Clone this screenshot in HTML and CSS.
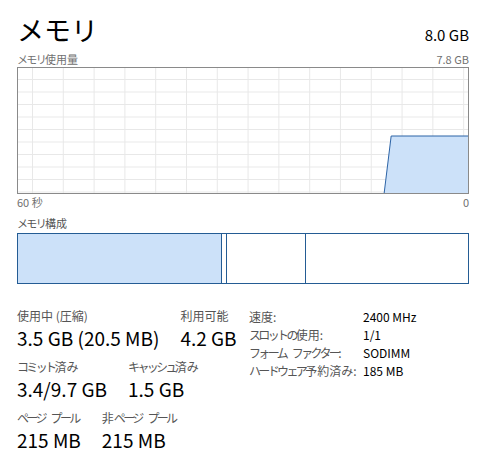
FILE: index.html
```html
<!DOCTYPE html>
<html lang="ja">
<head>
  <meta charset="UTF-8" />
  <title>メモリ</title>
  <link rel="stylesheet" href="styles.css">
</head>
<body>
  <div class="page">
    <div class="header">
      <h1 class="title">メモリ</h1>
      <div class="total">8.0 GB</div>
    </div>

    <div class="row-labels">
      <span><span class="kn">メモリ</span>使用量</span>
      <span>7.8 GB</span>
    </div>
    <div class="graph">
      <svg class="graph-fill" viewBox="0 0 451 125" preserveAspectRatio="none">
        <polygon points="367,125 374,68 451,68 451,125" fill="#cce1f9" />
        <polyline points="367,125 374,68 451,68" fill="none" stroke="#2b62a6" stroke-width="1" />
      </svg>
    </div>
    <div class="row-labels axis">
      <span>60 秒</span>
      <span>0</span>
    </div>

    <div class="section-label"><span class="kn">メモリ</span>構成</div>
    <div class="composition">
      <div class="seg seg-used"></div>
      <div class="seg seg-modified"></div>
      <div class="seg seg-standby"></div>
      <div class="seg seg-free"></div>
    </div>

    <div class="stats">
      <div class="stats-left">
        <div class="stat-row">
          <div class="stat">
            <div class="stat-label">使用中 (圧縮)</div>
            <div class="stat-value">3.5 GB (20.5 MB)</div>
          </div>
          <div class="stat">
            <div class="stat-label">利用可能</div>
            <div class="stat-value">4.2 GB</div>
          </div>
        </div>
        <div class="stat-row">
          <div class="stat">
            <div class="stat-label"><span class="kn">コミット</span>済み</div>
            <div class="stat-value">3.4/9.7 GB</div>
          </div>
          <div class="stat">
            <div class="stat-label"><span class="kn">キャッシュ</span>済み</div>
            <div class="stat-value">1.5 GB</div>
          </div>
        </div>
        <div class="stat-row">
          <div class="stat">
            <div class="stat-label"><span class="kn">ページ</span> <span class="kn">プール</span></div>
            <div class="stat-value">215 MB</div>
          </div>
          <div class="stat">
            <div class="stat-label">非<span class="kn">ページ</span> <span class="kn">プール</span></div>
            <div class="stat-value">215 MB</div>
          </div>
        </div>
      </div>

      <div class="specs">
        <div class="spec"><span class="spec-key">速度:</span><span class="spec-val">2400 MHz</span></div>
        <div class="spec"><span class="spec-key"><span class="kn">スロットの</span>使用:</span><span class="spec-val">1/1</span></div>
        <div class="spec"><span class="spec-key"><span class="kn">フォーム</span> <span class="kn">ファクター</span>:</span><span class="spec-val">SODIMM</span></div>
        <div class="spec"><span class="spec-key"><span class="kn">ハードウェア</span>予約済み:</span><span class="spec-val">185 MB</span></div>
      </div>
    </div>
  </div>
</body>
</html>
```

FILE: styles.css
```css
body {
  margin: 0;
  padding: 0;
  background: #fff;
  color: #000;
  font-family: "Noto Sans CJK JP", "Noto Sans", sans-serif;
}
.page {
  width: 452px;
  padding: 13px 21px 0 17px;
}
/* Yu Gothic UI has much narrower kana than Noto, squeeze them a bit */
.kn {
  letter-spacing: -0.22em;
}
.kn + .kn {
  margin-left: 3px;
}
.header {
  display: flex;
  justify-content: space-between;
  align-items: baseline;
}
.title {
  margin: 0;
  font-size: 27px;
  font-weight: normal;
  line-height: 34px;
}
.total {
  font-size: 15px;
}
.row-labels {
  display: flex;
  justify-content: space-between;
  font-size: 11px;
  line-height: 16px;
  color: #707070;
  margin-top: 4px;
}
.row-labels .kn,
.section-label .kn {
  letter-spacing: -0.15em;
}
.graph {
  position: relative;
  height: 125px;
  border: 1px solid #8a8a8a;
  background-color: #fff;
  background-image:
    linear-gradient(to right, #e8e8e8 1px, transparent 1px),
    linear-gradient(to bottom, #e8e8e8 1px, transparent 1px);
  background-size: 30.8px 12.5px;
  background-position: 14px 11px;
}
.graph-fill {
  position: absolute;
  left: 0;
  top: 0;
  width: 100%;
  height: 100%;
}
.axis {
  margin-top: 0;
}
.section-label {
  font-size: 11px;
  line-height: 16px;
  color: #555;
  margin-top: 5px;
  margin-bottom: 2px;
}
.composition {
  display: flex;
  height: 49px;
  border: 1px solid #245c94;
}
.seg {
  height: 100%;
  border-right: 1px solid #245c94;
}
.seg-used {
  width: 203px;
  background: #cce1f9;
}
.seg-modified { width: 4px; }
.seg-standby { width: 78px; }
.seg-free {
  flex: 1;
  border-right: none;
}
.stats {
  display: flex;
  margin-top: 24px;
}
.stats-left {
  width: 232px;
}
.stat-row {
  display: flex;
  gap: 21px;
  margin-bottom: 9px;
}
.stat-label {
  font-size: 12px;
  line-height: 16px;
  color: #555;
}
.stat-value {
  font-size: 19px;
  line-height: 24px;
  margin-top: 2px;
}
.specs {
  font-size: 12px;
  line-height: 18px;
}
.spec {
  display: flex;
}
.spec-key {
  flex-shrink: 0;
  width: 114px;
  white-space: nowrap;
  color: #555;
}
.spec-val {
  color: #000;
  white-space: nowrap;
}
```
